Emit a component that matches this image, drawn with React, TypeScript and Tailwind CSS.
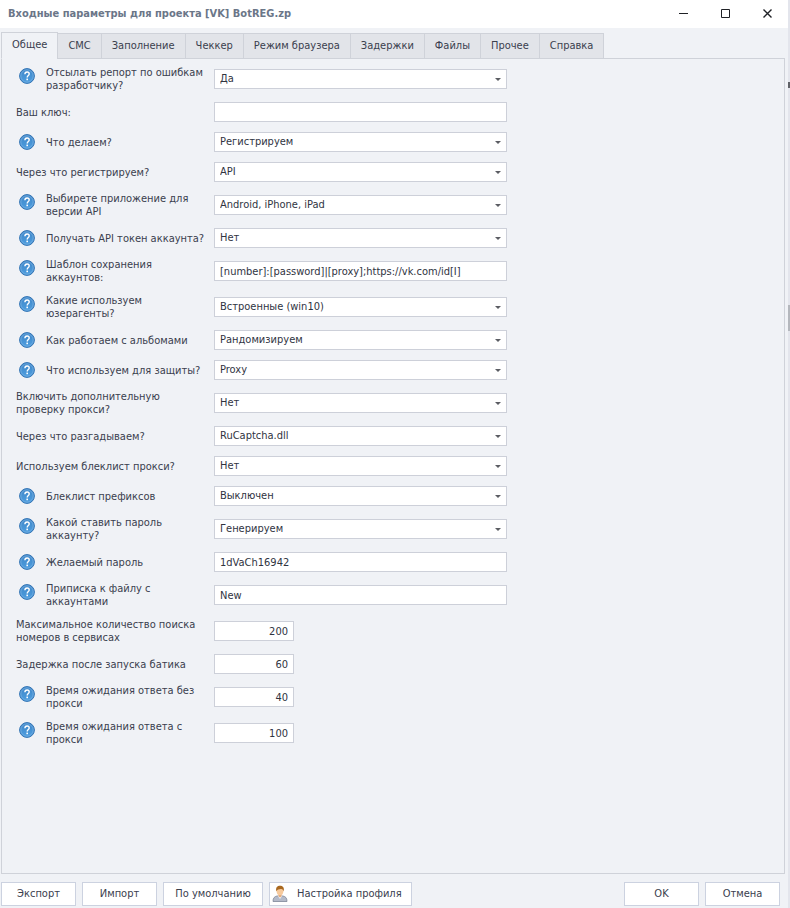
import { useState } from "react"

type Field = {
  id: string
  label: string
  value: string
  kind: "select" | "text" | "number"
  help?: boolean
}

const tabs = [
  "Общее",
  "СМС",
  "Заполнение",
  "Чеккер",
  "Режим браузера",
  "Задержки",
  "Файлы",
  "Прочее",
  "Справка",
]

const fields: Field[] = [
  { id: "report", label: "Отсылать репорт по ошибкам\nразработчику?", value: "Да", kind: "select", help: true },
  { id: "key", label: "Ваш ключ:", value: "", kind: "text" },
  { id: "action", label: "Что делаем?", value: "Регистрируем", kind: "select", help: true },
  { id: "via", label: "Через что регистрируем?", value: "API", kind: "select" },
  { id: "app", label: "Выбирете приложение для\nверсии API", value: "Android, iPhone, iPad", kind: "select", help: true },
  { id: "token", label: "Получать API токен аккаунта?", value: "Нет", kind: "select", help: true },
  { id: "template", label: "Шаблон сохранения\nаккаунтов:", value: "[number]:[password]|[proxy];https://vk.com/id[I]", kind: "text", help: true },
  { id: "agents", label: "Какие используем\nюзерагенты?", value: "Встроенные (win10)", kind: "select", help: true },
  { id: "albums", label: "Как работаем с альбомами", value: "Рандомизируем", kind: "select", help: true },
  { id: "protect", label: "Что используем для защиты?", value: "Proxy", kind: "select", help: true },
  { id: "proxycheck", label: "Включить дополнительную\nпроверку прокси?", value: "Нет", kind: "select" },
  { id: "captcha", label: "Через что разгадываем?", value: "RuCaptcha.dll", kind: "select" },
  { id: "blacklist", label: "Используем блеклист прокси?", value: "Нет", kind: "select" },
  { id: "prefixes", label: "Блеклист префиксов", value: "Выключен", kind: "select", help: true },
  { id: "passmode", label: "Какой ставить пароль\nаккаунту?", value: "Генерируем", kind: "select", help: true },
  { id: "password", label: "Желаемый пароль", value: "1dVaCh16942", kind: "text", help: true },
  { id: "suffix", label: "Приписка к файлу с\nаккаунтами", value: "New", kind: "text", help: true },
  { id: "maxsearch", label: "Максимальное количество поиска\nномеров в сервисах", value: "200", kind: "number" },
  { id: "delay", label: "Задержка после запуска батика", value: "60", kind: "number" },
  { id: "wait", label: "Время ожидания ответа без\nпрокси", value: "40", kind: "number", help: true },
  { id: "waitproxy", label: "Время ожидания ответа с\nпрокси", value: "100", kind: "number", help: true },
]

const controlClass =
  "block h-5 border border-[#cdd0d9] bg-white px-[5px] text-[11px] leading-[18px] text-[#30343f] outline-none focus:border-[#8aa5c8]"

function HelpIcon() {
  return (
    <svg viewBox="0 0 16 16" className="mt-[7px] ml-[17px] size-4 shrink-0" aria-hidden="true">
      <defs>
        <linearGradient id="help" x1="0" y1="0" x2="0" y2="1">
          <stop offset="0" stopColor="#3f86c8" />
          <stop offset="1" stopColor="#4e9fe0" />
        </linearGradient>
      </defs>
      <circle cx="8" cy="8" r="7.4" fill="url(#help)" stroke="#3273b3" />
      <circle cx="8" cy="8" r="6.2" fill="none" stroke="#7db3e2" strokeWidth="0.7" />
      <path d="M5.9 6.3C5.9 4.8 6.8 4 8.1 4s2.1.8 2.1 1.9c0 1.5-2 1.7-2 3.5" fill="none" stroke="#fff" strokeWidth="1.4" />
      <rect x="7.4" y="10.6" width="1.6" height="1.6" fill="#fff" />
    </svg>
  )
}

function UserIcon() {
  return (
    <svg viewBox="0 0 16 18" className="h-[18px] w-4" aria-hidden="true">
      <path d="M1 16.5c0-3.6 1.4-5 4.4-5.6h5.2c3 .6 4.4 2 4.4 5.6z" fill="#b4bac9" stroke="#7e8698" strokeWidth="0.8" />
      <path d="M5.6 10.6 8 14l2.4-3.4z" fill="#f4f5f8" />
      <path d="M6.5 9h3v2.2L8 12.6l-1.5-1.4z" fill="#e3a878" />
      <ellipse cx="8" cy="6" rx="3.4" ry="4.2" fill="#f6c99c" />
      <path d="M4.3 6.6C3.5 2.4 5.4.8 8 .8s4.6 1.5 3.7 5.8C11.3 4.8 10.6 4 9.3 3.9 7.500 4.300 5 3.800 4.300 6.600z" fill="#a9681f" />
    </svg>
  )
}

function FieldRow({ field }: { field: Field }) {
  const [value, setValue] = useState(field.value)
  const tall = field.label.includes("\n")

  return (
    <div className={`flex ${tall ? "h-9" : "h-[30px]"}`}>
      <div className="flex w-[212px] shrink-0">
        {field.help && <HelpIcon />}
        <label
          htmlFor={field.id}
          className={`self-center text-[11px] leading-[13px] whitespace-pre ${field.help ? "pl-[11px]" : "pl-[14px]"}`}
        >
          {field.label}
        </label>
      </div>
      <div className="self-center">
        {field.kind === "select" ? (
          <div className="relative">
            <select
              id={field.id}
              value={value}
              onChange={(e) => setValue(e.target.value)}
              className={`${controlClass} w-[293px] appearance-none`}
            >
              <option>{field.value}</option>
            </select>
            <svg viewBox="0 0 6 3" className="pointer-events-none absolute top-[9px] right-[6px] h-[3px] w-[6px]" aria-hidden="true">
              <path d="M0 0h6L3 3z" fill="#5b5d63" />
            </svg>
          </div>
        ) : (
          <input
            id={field.id}
            type="text"
            inputMode={field.kind === "number" ? "numeric" : "text"}
            value={value}
            onChange={(e) => setValue(e.target.value)}
            className={`${controlClass} ${field.kind === "number" ? "w-20 text-right" : "w-[293px]"}`}
          />
        )}
      </div>
    </div>
  )
}

const buttonClass =
  "flex h-6 items-center border border-[#ccd2e0] bg-white text-[11px] hover:bg-[#f4f7fc]"

export default function App() {
  const [active, setActive] = useState("Общее")

  return (
    <div className="flex min-h-screen bg-[#f0f2f6] font-['DejaVu_Sans_Condensed','DejaVu_Sans',sans-serif] text-[11px] text-[#3a404e]">
      <div className="flex min-w-0 flex-1 flex-col">
        <header className="flex h-7 items-center bg-white pl-2">
          <h1 className="text-[11px] font-bold text-[#6b7688]">Входные параметры для проекта [VK] BotREG.zp</h1>
          <div className="ml-auto flex text-[#1f2126]">
            <button aria-label="Свернуть" className="flex h-7 w-[42px] items-center justify-center">
              <svg viewBox="0 0 10 10" className="size-[10px]">
                <path d="M1 4.500h9" stroke="currentColor" />
              </svg>
            </button>
            <button aria-label="Развернуть" className="flex h-7 w-[42px] items-center justify-center">
              <svg viewBox="0 0 10 10" className="size-[10px]">
                <path d="M1.500.5h8v8h-8z" fill="none" stroke="currentColor" />
              </svg>
            </button>
            <button aria-label="Закрыть" className="flex h-7 w-[42px] items-center justify-center">
              <svg viewBox="0 0 10 10" className="size-[10px]">
                <path d="M1.500.5l8 8M9.500.5l-8 8" stroke="currentColor" strokeWidth="1.400" />
              </svg>
            </button>
          </div>
        </header>

        <div className="flex flex-1 flex-col pt-1 pr-[3px] pl-px">
          <div role="tablist" className="z-10 -mb-px flex h-[27px] items-end">
            {tabs.map((tab) => (
              <button
                key={tab}
                role="tab"
                aria-selected={tab === active}
                onClick={() => setActive(tab)}
                className={`border border-[#cfd2d9] px-[10px] text-[11px] ${
                  tab === active
                    ? "h-[27px] border-b-[#f0f2f6] bg-[#f0f2f6]"
                    : "-ml-px h-[26px] bg-[#e2e4e9]"
                }`}
              >
                {tab}
              </button>
            ))}
          </div>

          <main role="tabpanel" className="flex-1 border border-[#cfd2d9] pt-[2px]">
            {fields.map((field) => (
              <FieldRow key={field.id} field={field} />
            ))}
          </main>
        </div>

        <footer className="flex h-[34px] items-end gap-[6px] pr-2 pb-[2px] pl-px">
          <button className={`${buttonClass} w-[75px] justify-center`}>Экспорт</button>
          <button className={`${buttonClass} w-[75px] justify-center`}>Импорт</button>
          <button className={`${buttonClass} w-[100px] justify-center`}>По умолчанию</button>
          <button className={`${buttonClass} w-[143px] gap-[9px] pl-[2px]`}>
            <UserIcon />
            Настройка профиля
          </button>
          <button className={`${buttonClass} ml-auto w-[75px] justify-center`}>OK</button>
          <button className={`${buttonClass} w-[75px] justify-center`}>Отмена</button>
        </footer>
      </div>

      {/* Edge of the window behind the dialog */}
      <div className="flex w-[2px] shrink-0 flex-col bg-[#e3e5ec]">
        <div className="mt-[82px] h-[6px] bg-[#5f6167]" />
        <div className="mt-[217px] h-[26px] bg-[#b4b7bd]" />
      </div>
    </div>
  )
}
